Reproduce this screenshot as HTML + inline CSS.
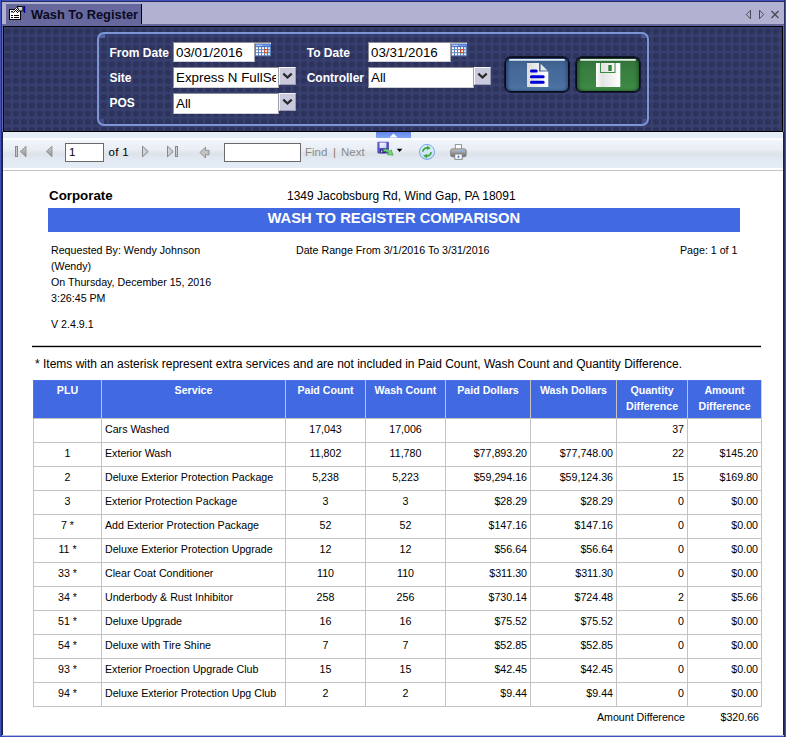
<!DOCTYPE html>
<html><head><meta charset="utf-8">
<style>
*{box-sizing:border-box;margin:0;padding:0}
html,body{width:786px;height:737px;overflow:hidden;background:#fff}
body{position:relative;font-family:"Liberation Sans",sans-serif;color:#000}
.abs{position:absolute}
.t{position:absolute;white-space:nowrap;line-height:1}
/* frame */
#fr-l{left:0;top:0;width:2px;height:737px;background:linear-gradient(90deg,#4050bf 0,#4050bf 1px,#272d68 1px,#272d68 2px)}
#fr-r{left:784px;top:0;width:2px;height:737px;background:linear-gradient(90deg,#272d68 0,#272d68 1px,#4050bf 1px,#4050bf 2px)}
#fr-t{left:0;top:0;width:786px;height:2px;background:linear-gradient(180deg,#4050bf 0,#4050bf 1px,#262b5c 1px,#262b5c 2px)}
#fr-b{left:0;top:735px;width:786px;height:2px;background:linear-gradient(180deg,#b4bbe6 0,#b4bbe6 1px,#4050bf 1px,#4050bf 2px)}
/* tab strip */
#strip{left:2px;top:2px;width:782px;height:22px;background:#b1b2d2}
#tab{left:6px;top:4px;width:136px;height:20px;background:#67689d;border-right:1px solid #000}
#under{left:2px;top:24px;width:782px;height:108px;background:#67689d}
#navy{left:3px;top:26px;width:780px;height:106px;border:1px solid #000;background-color:#373f6f}
#panel{left:97px;top:32px;width:552px;height:94px;border:2px solid #7c95d6;border-radius:7px}
.lbl{color:#fff;font-weight:bold;font-size:12px}
.inp{position:absolute;padding-right:3px;background:#fff;border:1px solid #8d8d99;border-bottom-color:#d0d0d8;border-right-color:#a0a0a8;font-size:13.33px;line-height:18px;padding-left:2px;white-space:nowrap;overflow:hidden}
.ddb{position:absolute;width:17px;height:18px;background:#c9cade;border:1px solid #f4f4fa;border-right-color:#9a9ab0;border-bottom-color:#9a9ab0}
/* toolbar */
#tb{left:3px;top:132px;width:780px;height:39px;background:linear-gradient(180deg,#e5edf6 0,#e5edf6 5.5px,#fbfcfe 6.5px,#fbfcfe 7.5px,#eef4fa 9px,#e9eff5 17px,#dde3e9 22px,#e2e9f3 27px,#e4ecf6 35.5px,#ffffff 36.5px,#ffffff 37.8px,#c6c6c6 38.2px,#c6c6c6 39px)}
.tin{position:absolute;background:#fff;border:1px solid #6a6a6a;height:19px;top:143px}
.tt{font-size:11.5px;top:147px}
/* report */
.r11{font-size:10.67px}
#bar{left:48px;top:208px;width:692px;height:24px;background:#4169e1}
table{position:absolute;left:33px;top:380px;border-collapse:collapse;table-layout:fixed;font-size:10.67px}
td,th{border:1px solid #c3c3c3;height:24px;padding:0 3px 3px 3px;vertical-align:middle;white-space:nowrap;overflow:hidden}
th{background:#4169e1;color:#fff;font-weight:bold;height:38px;vertical-align:top;padding-top:1px;line-height:16px;white-space:normal;text-align:center}
th{border-top-color:#4a70e3}th:first-child{border-left-color:#5277e4}th:last-child{border-right-color:#d4d4d0}td.c{text-align:center}td.r{text-align:right}td.l{text-align:left}
</style></head><body>

<div class="abs" id="strip"></div>
<div class="abs" id="under"></div>
<div class="abs" id="tab"></div>
<div class="t" style="left:31px;top:9px;font-size:12.85px;font-weight:bold;color:#0a0a1e">Wash To Register</div>
<!-- tab icon -->
<svg class="abs" style="left:8px;top:5px" width="18" height="16" viewBox="0 0 18 16">
 <defs><pattern id="chk" width="2" height="2" patternUnits="userSpaceOnUse"><rect width="2" height="2" fill="#fff"/><rect width="1" height="1" fill="#000"/><rect x="1" y="1" width="1" height="1" fill="#000"/></pattern></defs>
 <rect x="1.5" y="4.5" width="11" height="10" fill="#fff" stroke="#000"/>
 <path d="M3 10.5h2M6 10.5h5M3 12.5h2M6 12.5h5" stroke="#000" stroke-width="1"/>
 <path d="M3 6l1.8 0 0 1.6 -1.4 0z" fill="#000"/>
 <path d="M4.4 7L8.4 2.2l3 3.6-2 3.2-2.2-2.6-1.6 1.6z" fill="url(#chk)"/>
 <path d="M8.6 1.1h5.2c.8 0 1.3.6 1.3 1.4v2.6c0 .8-.5 1.4-1.3 1.4h-2.6z" fill="#000"/>
 <path d="M9.6 2h4.3c.3 0 .5.2.5.6v2.3c0 .3-.2.6-.5.6h-2.4z" fill="#d2d2d2"/>
 <path d="M15.2 0.9h2v7.2h-.9l-1.1-2z" fill="#00008c"/>
</svg>
<!-- strip nav icons -->
<svg class="abs" style="left:744px;top:8px" width="38" height="13" viewBox="0 0 38 13">
 <path d="M6.5 2.2v8.6L2.3 6.5z" fill="none" stroke="#4a4a58" stroke-width="1"/>
 <path d="M15.5 2.2v8.6l4.2-4.3z" fill="none" stroke="#4a4a58" stroke-width="1"/>
 <path d="M27.5 3l7 7M34.5 3l-7 7" stroke="#4a4a58" stroke-width="1.4"/>
</svg>

<div class="abs" id="navy"></div>
<svg class="abs" style="left:4px;top:27px" width="778" height="104" viewBox="0 0 778 104">
 <defs><pattern id="dots" width="8" height="41" patternUnits="userSpaceOnUse"><g fill="#2d335b"><circle cx="3.8" cy="4.6" r="3.1"/><circle cx="3.8" cy="12.8" r="3.1"/><circle cx="3.8" cy="21.0" r="3.1"/><circle cx="3.8" cy="29.2" r="3.1"/><circle cx="3.8" cy="37.4" r="3.1"/></g></pattern></defs>
 <rect width="778" height="104" fill="url(#dots)"/>
</svg>
<div class="abs" style="left:99px;top:34px;width:6px;height:4px;background:#5661a6;border-top-left-radius:5px"></div>
<div class="abs" style="left:641px;top:34px;width:6px;height:4px;background:#4a548f;border-top-right-radius:5px"></div>
<div class="abs" style="left:99px;top:119px;width:5px;height:5px;background:#434c88;border-bottom-left-radius:5px"></div>
<div class="abs" style="left:642px;top:119px;width:5px;height:5px;background:#434c88;border-bottom-right-radius:5px"></div>
<div class="abs" id="panel"></div>

<div class="t lbl" style="left:109.5px;top:47px">From Date</div>
<div class="t lbl" style="left:109.5px;top:72px">Site</div>
<div class="t lbl" style="left:109.5px;top:97px">POS</div>
<div class="t lbl" style="left:306.7px;top:47px">To Date</div>
<div class="t lbl" style="left:306.7px;top:72px">Controller</div>

<div class="inp" style="left:173px;top:42px;width:82px;height:20px;line-height:19px">03/01/2016</div>
<div class="inp" style="left:368px;top:42px;width:83px;height:20px;line-height:19px">03/31/2016</div>
<div class="inp" style="left:173px;top:67px;width:106px;height:21px;line-height:19px"><span style="display:block;width:100px;overflow:hidden">Express N FullSe</span></div>
<div class="inp" style="left:173px;top:93px;width:106px;height:21px;line-height:19px">All</div>
<div class="inp" style="left:368px;top:67px;width:106px;height:21px;line-height:19px">All</div>
<div class="ddb" style="left:279px;top:67px"></div>
<div class="ddb" style="left:279px;top:93px"></div>
<div class="ddb" style="left:474px;top:67px"></div>
<svg class="abs" style="left:279px;top:67px" width="17" height="17"><path d="M4.3 6.6l4.2 3.9 4.2-3.9" fill="none" stroke="#2a2a2a" stroke-width="2.3"/></svg>
<svg class="abs" style="left:279px;top:93px" width="17" height="17"><path d="M4.3 6.6l4.2 3.9 4.2-3.9" fill="none" stroke="#2a2a2a" stroke-width="2.3"/></svg>
<svg class="abs" style="left:474px;top:67px" width="17" height="17"><path d="M4.3 6.6l4.2 3.9 4.2-3.9" fill="none" stroke="#2a2a2a" stroke-width="2.3"/></svg>

<!-- calendar icons -->
<svg class="abs cal" style="left:255px;top:42px" width="16" height="15" viewBox="0 0 16 15">
 <rect x="0" y="0" width="16" height="2" fill="#fff"/>
 <path d="M0.5 0.5h16" stroke="#000" stroke-width="1" stroke-dasharray="1 1"/>
 <path d="M-0.5 1.5h16" stroke="#222" stroke-width="0.8" stroke-dasharray="1 1" opacity=".55"/>
 <rect x="0" y="1.8" width="16" height="3" fill="#4a7ee0"/>
 <rect x="1" y="2.8" width="6" height="0.9" fill="#dfe8fb"/><rect x="7" y="2.8" width="7.5" height="0.9" fill="#86a8ec"/>
 <rect x="0" y="4.7" width="16" height="9.6" fill="#5c80ba"/>
 <g fill="#fff"><rect x="1" y="5.2" width="2" height="2"/><rect x="4" y="5.2" width="2" height="2"/><rect x="7" y="5.2" width="2" height="2"/><rect x="10" y="5.2" width="2" height="2"/>
 <rect x="1" y="8.2" width="2" height="2"/><rect x="4" y="8.2" width="2" height="2"/><rect x="7" y="8.2" width="2" height="2"/>
 <rect x="1" y="11.2" width="2" height="2"/><rect x="4" y="11.2" width="2" height="2"/><rect x="7" y="11.2" width="2" height="2"/></g>
 <g fill="#d4e4fa"><rect x="13" y="5.2" width="2" height="2"/><rect x="13" y="8.2" width="2" height="2"/><rect x="10" y="11.2" width="2" height="2"/><rect x="13" y="11.2" width="2" height="2"/></g>
 <rect x="9.1" y="7.1" width="4" height="4" rx="0.8" fill="#e2450f"/><rect x="10.2" y="8.2" width="1.9" height="1.9" fill="#fff6f0"/>
 <path d="M0 14.6h16" stroke="#3c4f80" stroke-width=".8"/>
</svg>
<svg class="abs cal" style="left:451px;top:42px" width="16" height="15" viewBox="0 0 16 15">
 <rect x="0" y="0" width="16" height="2" fill="#fff"/>
 <path d="M0.5 0.5h16" stroke="#000" stroke-width="1" stroke-dasharray="1 1"/>
 <path d="M-0.5 1.5h16" stroke="#222" stroke-width="0.8" stroke-dasharray="1 1" opacity=".55"/>
 <rect x="0" y="1.8" width="16" height="3" fill="#4a7ee0"/>
 <rect x="1" y="2.8" width="6" height="0.9" fill="#dfe8fb"/><rect x="7" y="2.8" width="7.5" height="0.9" fill="#86a8ec"/>
 <rect x="0" y="4.7" width="16" height="9.6" fill="#5c80ba"/>
 <g fill="#fff"><rect x="1" y="5.2" width="2" height="2"/><rect x="4" y="5.2" width="2" height="2"/><rect x="7" y="5.2" width="2" height="2"/><rect x="10" y="5.2" width="2" height="2"/>
 <rect x="1" y="8.2" width="2" height="2"/><rect x="4" y="8.2" width="2" height="2"/><rect x="7" y="8.2" width="2" height="2"/>
 <rect x="1" y="11.2" width="2" height="2"/><rect x="4" y="11.2" width="2" height="2"/><rect x="7" y="11.2" width="2" height="2"/></g>
 <g fill="#d4e4fa"><rect x="13" y="5.2" width="2" height="2"/><rect x="13" y="8.2" width="2" height="2"/><rect x="10" y="11.2" width="2" height="2"/><rect x="13" y="11.2" width="2" height="2"/></g>
 <rect x="9.1" y="7.1" width="4" height="4" rx="0.8" fill="#e2450f"/><rect x="10.2" y="8.2" width="1.9" height="1.9" fill="#fff6f0"/>
 <path d="M0 14.6h16" stroke="#3c4f80" stroke-width=".8"/>
</svg>

<!-- buttons -->
<div class="abs" style="left:505px;top:57px;width:64px;height:35px;border-radius:6px;border:1px solid #070b1a;background:linear-gradient(180deg,#2c4a78 0,#3f628f 12%,#466a9a 40%,#486c9c 70%,#4f77a7 100%);box-shadow:0 0 0 .7px #070b1a, inset 2px 0 3px rgba(15,30,70,.45), inset -2px 0 3px rgba(15,30,70,.3)"></div>
<div class="abs" style="left:509px;top:59px;width:56px;height:2px;border-radius:1px;background:linear-gradient(180deg,#f2f6fb,#a9bdd6)"></div>
<div class="abs" style="left:576px;top:57px;width:64px;height:35px;border-radius:6px;border:1px solid #070b1a;background:linear-gradient(180deg,#1f4a2c 0,#33753b 12%,#38803f 40%,#3a8342 70%,#3f8c47 100%);box-shadow:0 0 0 .7px #070b1a, inset 2px 0 3px rgba(5,40,15,.45), inset -2px 0 3px rgba(5,40,15,.35)"></div>
<div class="abs" style="left:580px;top:59px;width:56px;height:2px;border-radius:1px;background:linear-gradient(180deg,#f2f8f2,#a8c8ac)"></div>
<svg class="abs" style="left:527px;top:63px" width="22" height="24" viewBox="0 0 22 24">
 <defs><linearGradient id="dg" x1="0" x2="1"><stop offset="0" stop-color="#dcdcdc"/><stop offset="1" stop-color="#fff"/></linearGradient></defs>
 <path d="M0 0h12v8.6h9.3V24H0z" fill="url(#dg)"/>
 <path d="M13.6 0.8L20.5 7.4h-6.9z" fill="#e6e6e6"/>
 <path d="M4.4 8h4.8M4.4 13.7h11.8M4.4 19.2h11.8" stroke="#0000d8" stroke-width="3" stroke-linecap="round"/>
</svg>
<svg class="abs" style="left:596px;top:63px" width="25" height="24" viewBox="0 0 25 24">
 <defs><linearGradient id="fg" x1="0" x2="1"><stop offset="0" stop-color="#fff"/><stop offset="0.25" stop-color="#e2e2e2"/><stop offset="1" stop-color="#fff"/></linearGradient></defs>
 <rect x="0" y="0" width="24.3" height="24" fill="url(#fg)"/>
 <rect x="4.5" y="-1" width="14.5" height="10.5" fill="none" stroke="#3a8a44" stroke-width="1"/>
 <rect x="12.3" y="2" width="3.4" height="6" fill="#2f8038"/>
</svg>

<!-- toolbar -->
<div class="abs" id="tb"></div>
<div class="abs" style="left:376px;top:132px;width:35px;height:6px;background:linear-gradient(180deg,#5f86ea,#86a6f2)"></div>
<svg class="abs" style="left:389px;top:132px" width="9" height="6"><path d="M0.5 5.5L4.5 1.5l4 4z" fill="#fff"/></svg>

<svg class="abs" style="left:14px;top:145px" width="14" height="13"><defs><linearGradient id="ig2" x1="0" y1="0" x2="1" y2="1"><stop offset="0" stop-color="#e2e2e2"/><stop offset="1" stop-color="#b8b8b8"/></linearGradient><linearGradient id="ig" x1="0" y1="0" x2="0" y2="1"><stop offset="0" stop-color="#cfcfcf"/><stop offset="1" stop-color="#8e8e8e"/></linearGradient></defs>
 <rect x="1.5" y="1.5" width="2" height="10" fill="#c8c8c8" stroke="#8a8a8a" stroke-width="1"/><path d="M12 1.2v10.6L6.3 6.5z" fill="url(#ig)" stroke="#8a8a8a" stroke-width=".8"/></svg>
<svg class="abs" style="left:45px;top:145px" width="9" height="13"><path d="M7 1.2v10.6L1.3 6.5z" fill="url(#ig)" stroke="#8a8a8a" stroke-width=".8"/></svg>
<div class="tin" style="left:65px;width:39px"></div>
<div class="t tt" style="left:69px">1</div>
<div class="t tt" style="left:108.5px;letter-spacing:.35px">of 1</div>
<svg class="abs" style="left:141px;top:145px" width="9" height="13"><path d="M1.5 1.2v10.6L7.2 6.5z" fill="url(#ig2)" stroke="#888" stroke-width="1"/></svg>
<svg class="abs" style="left:166px;top:145px" width="14" height="13"><path d="M1.5 1.2v10.6L7.2 6.5z" fill="url(#ig2)" stroke="#888" stroke-width="1"/><rect x="9.5" y="1.5" width="2" height="10" fill="url(#ig2)" stroke="#888" stroke-width="1"/></svg>
<svg class="abs" style="left:199px;top:146px" width="12" height="13"><path d="M1 6.5L6.5 1.2V4.3H10v4.5H6.5v3.2z" fill="#c2c2c2" stroke="#8a8a8a" stroke-width=".9"/></svg>
<div class="tin" style="left:224px;width:77px"></div>
<div class="t tt" style="left:305px;color:#8a8a8a">Find</div>
<div class="t tt" style="left:333px;color:#8a7a60">|</div>
<div class="t tt" style="left:341px;color:#8a8a8a">Next</div>
<!-- export icon -->
<svg class="abs" style="left:377px;top:141px" width="26" height="18" viewBox="0 0 26 18">
 <defs><linearGradient id="fl" x1="0" y1="0" x2="1" y2="1"><stop offset="0" stop-color="#6a62d8"/><stop offset="1" stop-color="#4640b0"/></linearGradient>
 <linearGradient id="lb" x1="0" y1="0" x2="1" y2="1"><stop offset="0" stop-color="#ffffff"/><stop offset="1" stop-color="#c4d0f4"/></linearGradient></defs>
 <rect x="0.3" y="0.8" width="11.6" height="11.6" rx="0.8" fill="url(#fl)"/>
 <rect x="2.6" y="1.6" width="6.8" height="5.4" fill="url(#lb)"/>
 <rect x="3.2" y="8.6" width="5" height="3.6" fill="#26225e"/>
 <rect x="4" y="9.3" width="1.4" height="2.2" fill="#b8c0e8"/>
 <path d="M6.6 8.2c2.2-.6 4.6.2 6.2 2.2l1.4-1.6 1.8 5.4-5.6-.6 1.4-1.5c-1.4-1.6-3.3-2.2-5.2-1.7z" fill="#78d478" stroke="#3c9e44" stroke-width=".7" stroke-linejoin="round"/>
 <path d="M19.8 7.7h5.6L22.6 10.9z" fill="#000"/>
</svg>
<!-- refresh -->
<svg class="abs" style="left:418px;top:143px" width="18" height="18" viewBox="0 0 18 18">
 <defs><linearGradient id="rf" x1="0" y1="0" x2="0" y2="1"><stop offset="0" stop-color="#e4f0fc"/><stop offset="1" stop-color="#c4daf4"/></linearGradient></defs>
 <circle cx="9" cy="8.9" r="7.5" fill="url(#rf)" stroke="#6f9ee8" stroke-width=".9"/>
 <path d="M4.8 8.6a4.2 4.2 0 0 1 5-3.6" fill="none" stroke="#36ac36" stroke-width="1.7"/><path d="M9.2 2.4l3.6 2.9-4 1.6z" fill="#36ac36"/>
 <path d="M13.2 9.2a4.2 4.2 0 0 1-5 3.6" fill="none" stroke="#36ac36" stroke-width="1.7"/><path d="M8.8 15.4l-3.6-2.9 4-1.6z" fill="#36ac36"/>
</svg>
<!-- printer -->
<svg class="abs" style="left:450px;top:144px" width="17" height="16" viewBox="0 0 17 16">
 <defs><linearGradient id="pr" x1="0" y1="0" x2="0" y2="1"><stop offset="0" stop-color="#c4c4c4"/><stop offset="1" stop-color="#6e6e6e"/></linearGradient></defs>
 <rect x="5.3" y="0.6" width="6.2" height="5" fill="#fff" stroke="#8a8a8a" stroke-width=".9"/>
 <rect x="0.6" y="4.8" width="15.6" height="8" rx="2" fill="url(#pr)" stroke="#6a6a6a" stroke-width=".7"/>
 <rect x="8.5" y="7" width="4.5" height="1.2" fill="#7ab0f0"/>
 <rect x="4.8" y="10" width="7.4" height="5.3" fill="#fff" stroke="#777" stroke-width=".9"/>
 <rect x="7.6" y="11.6" width="1.8" height="2.2" fill="#3a78d0"/>
</svg>

<!-- report header -->
<div class="t" style="left:49px;top:189px;font-size:13.33px;font-weight:bold">Corporate</div>
<div class="t" style="left:287px;top:190px;font-size:12px">1349 Jacobsburg Rd, Wind Gap, PA 18091</div>
<div class="abs" id="bar"></div>
<div class="t" style="left:267.5px;top:211px;font-size:14.76px;font-weight:bold;color:#fff">WASH TO REGISTER COMPARISON</div>
<div class="t r11" style="left:51px;top:245px">Requested By: Wendy Johnson</div>
<div class="t r11" style="left:51px;top:261px">(Wendy)</div>
<div class="t r11" style="left:51px;top:277px">On Thursday, December 15, 2016</div>
<div class="t r11" style="left:51px;top:293px">3:26:45 PM</div>
<div class="t r11" style="left:51px;top:319px">V 2.4.9.1</div>
<div class="t r11" style="left:296px;top:245px">Date Range From 3/1/2016 To 3/31/2016</div>
<div class="t r11" style="left:680px;top:245px">Page: 1 of 1</div>
<div class="abs" style="left:32px;top:345px;width:729px;height:3px;background:linear-gradient(180deg,rgba(0,0,0,.22) 0,rgba(0,0,0,.22) 1px,#000 1px,#000 2px,rgba(0,0,0,.18) 2px,rgba(0,0,0,.18) 3px)"></div>
<div class="t" style="left:35px;top:358px;font-size:12px">* Items with an asterisk represent extra services and are not included in Paid Count, Wash Count and Quantity Difference.</div>

<table>
<colgroup><col style="width:68px"><col style="width:184px"><col style="width:80px"><col style="width:80px"><col style="width:85px"><col style="width:86px"><col style="width:71px"><col style="width:74px"></colgroup>
<tr><th>PLU</th><th>Service</th><th>Paid Count</th><th>Wash Count</th><th>Paid Dollars</th><th>Wash Dollars</th><th>Quantity Difference</th><th>Amount Difference</th></tr>
<tr><td class="c"></td><td class="l">Cars Washed</td><td class="c">17,043</td><td class="c">17,006</td><td class="r"></td><td class="r"></td><td class="r">37</td><td class="r"></td></tr>
<tr><td class="c">1</td><td class="l">Exterior Wash</td><td class="c">11,802</td><td class="c">11,780</td><td class="r">$77,893.20</td><td class="r">$77,748.00</td><td class="r">22</td><td class="r">$145.20</td></tr>
<tr><td class="c">2</td><td class="l">Deluxe Exterior Protection Package</td><td class="c">5,238</td><td class="c">5,223</td><td class="r">$59,294.16</td><td class="r">$59,124.36</td><td class="r">15</td><td class="r">$169.80</td></tr>
<tr><td class="c">3</td><td class="l">Exterior Protection Package</td><td class="c">3</td><td class="c">3</td><td class="r">$28.29</td><td class="r">$28.29</td><td class="r">0</td><td class="r">$0.00</td></tr>
<tr><td class="c">7 *</td><td class="l">Add Exterior Protection Package</td><td class="c">52</td><td class="c">52</td><td class="r">$147.16</td><td class="r">$147.16</td><td class="r">0</td><td class="r">$0.00</td></tr>
<tr><td class="c">11 *</td><td class="l">Deluxe Exterior Protection Upgrade</td><td class="c">12</td><td class="c">12</td><td class="r">$56.64</td><td class="r">$56.64</td><td class="r">0</td><td class="r">$0.00</td></tr>
<tr><td class="c">33 *</td><td class="l">Clear Coat Conditioner</td><td class="c">110</td><td class="c">110</td><td class="r">$311.30</td><td class="r">$311.30</td><td class="r">0</td><td class="r">$0.00</td></tr>
<tr><td class="c">34 *</td><td class="l">Underbody &amp; Rust Inhibitor</td><td class="c">258</td><td class="c">256</td><td class="r">$730.14</td><td class="r">$724.48</td><td class="r">2</td><td class="r">$5.66</td></tr>
<tr><td class="c">51 *</td><td class="l">Deluxe Upgrade</td><td class="c">16</td><td class="c">16</td><td class="r">$75.52</td><td class="r">$75.52</td><td class="r">0</td><td class="r">$0.00</td></tr>
<tr><td class="c">54 *</td><td class="l">Deluxe with Tire Shine</td><td class="c">7</td><td class="c">7</td><td class="r">$52.85</td><td class="r">$52.85</td><td class="r">0</td><td class="r">$0.00</td></tr>
<tr><td class="c">93 *</td><td class="l">Exterior Proection Upgrade Club</td><td class="c">15</td><td class="c">15</td><td class="r">$42.45</td><td class="r">$42.45</td><td class="r">0</td><td class="r">$0.00</td></tr>
<tr><td class="c">94 *</td><td class="l">Deluxe Exterior Protection Upg Club</td><td class="c">2</td><td class="c">2</td><td class="r">$9.44</td><td class="r">$9.44</td><td class="r">0</td><td class="r">$0.00</td></tr>
</table>
<div class="t r11" style="right:101px;top:712px">Amount Difference</div>
<div class="t r11" style="right:27px;top:712px">$320.66</div>

<div class="abs" style="left:2px;top:132px;width:1px;height:605px;background:#1d2040"></div><div class="abs" style="left:783px;top:132px;width:1px;height:605px;background:#1d2040"></div><div class="abs" id="fr-b"></div><div class="abs" id="fr-t"></div><div class="abs" id="fr-l"></div><div class="abs" id="fr-r"></div>
</body></html>
